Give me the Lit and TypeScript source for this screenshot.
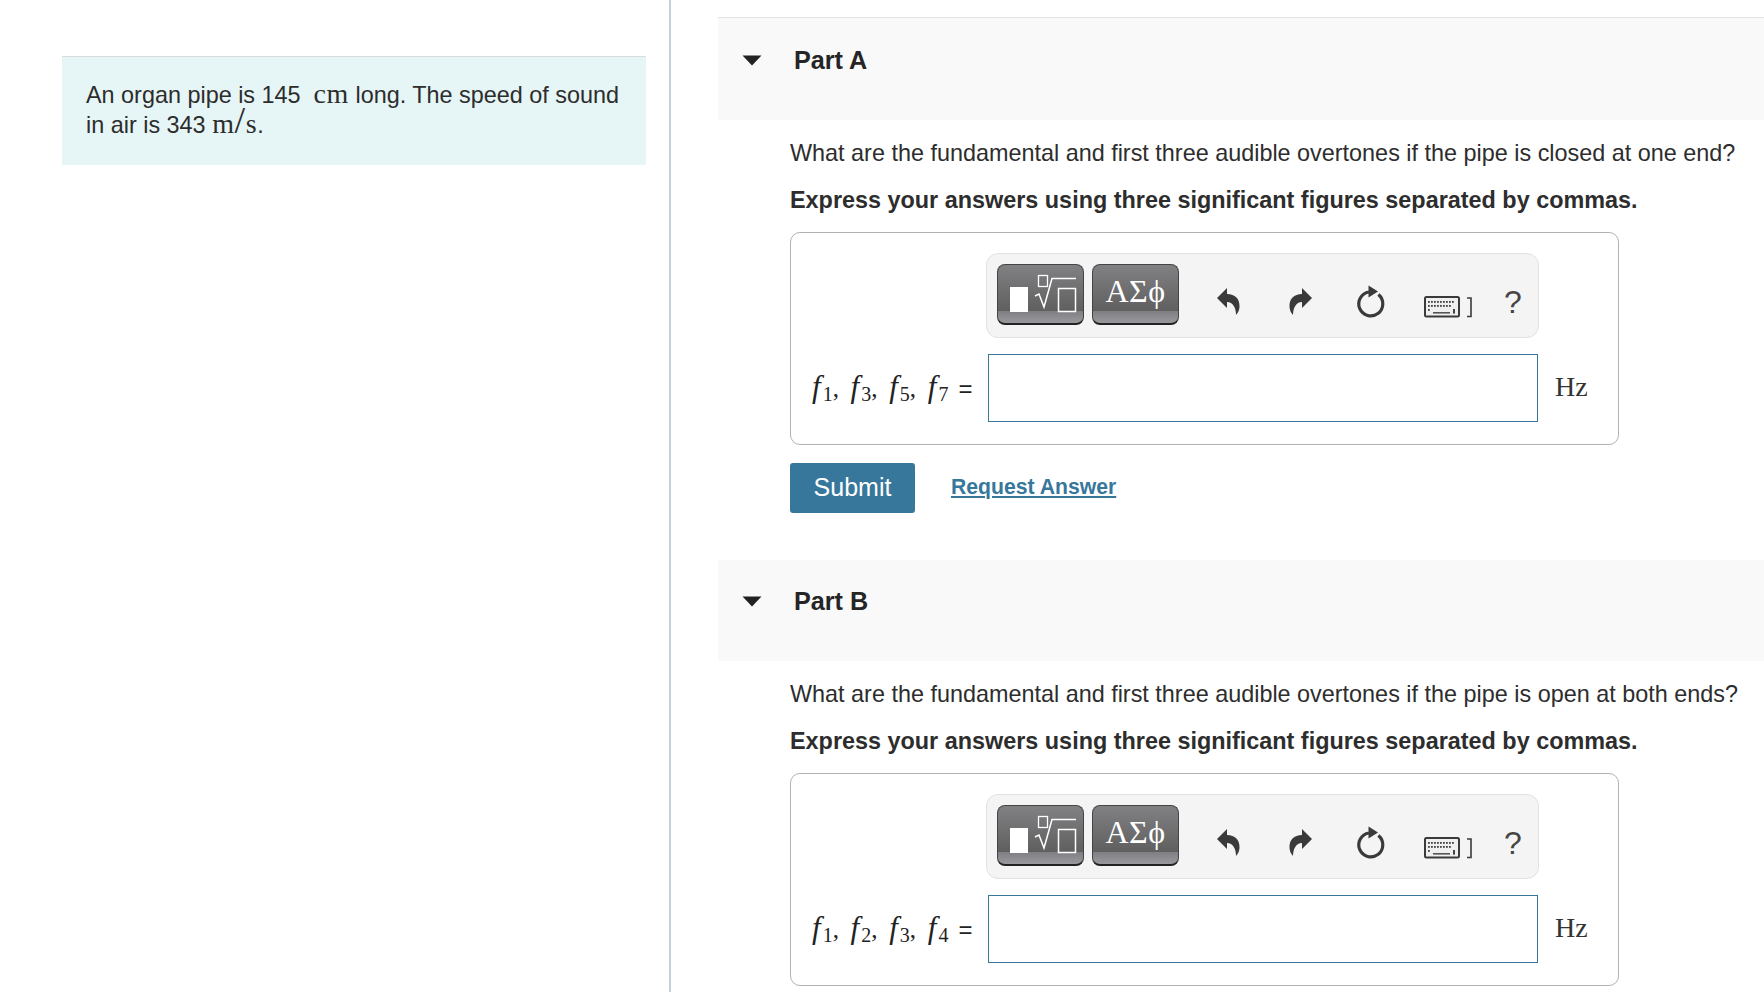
import { LitElement, html, css, svg, nothing } from "lit";
import { customElement } from "lit/decorators.js";

const undoPath = "M2 12 L12 2 V8 C20 8 25 13 24.5 21 C24.3 24 23 27 21 29 C21 22 18 16 12 16 V22 Z";

const keyRows = [
  [6, 9, 12, 15, 18, 21, 24, 27, 30],
  [6, 9, 12, 15, 18, 21, 24, 27],
];

@customElement("math-toolbar")
class MathToolbar extends LitElement {
  static styles = css`
    :host { display: flex; box-sizing: border-box; width: 553px; height: 85px; margin-left: 195px;
      background: #f4f4f4; border: 1px solid #e2e2e2; border-radius: 12px; padding: 10px 0 0 10px; }
    .btn { box-sizing: border-box; width: 87px; height: 61px; border: 1px solid #444; border-bottom: 2px solid #222;
      border-radius: 8px; margin-right: 8px; flex: none; overflow: hidden; display: flex; justify-content: center;
      background: linear-gradient(#818184 0, #5f5f5f 46px, #7f7f83 46px, #99999d 100%); }
    .btn svg { display: block; }
    .greek { color: #fff; font: 32px/1 "Liberation Serif", serif; padding-top: 10px; letter-spacing: 0.5px; }
    svg.ic { display: block; flex: none; }
    .undo { margin: 22px 0 0 28px; }
    .redo { margin: 22px 0 0 45px; }
    .reset { margin: 21px 0 0 41px; }
    .kbd { margin: 32px 0 0 37px; }
    .help { font: 32px/1 "Liberation Sans", sans-serif; color: #444; margin: 22px 0 0 30px; }
  `;
  render() {
    return html`
      <div class="btn">
        <svg width="85" height="58" viewBox="0 0 85 58" fill="none" stroke="#fff">
          <rect x="12" y="22" width="18" height="25" fill="#fff" stroke="none"></rect>
          <rect x="40.5" y="10.5" width="9" height="11" stroke-width="1.3"></rect>
          <path d="M37 31 L41 29 L46 42 L54 13.5 H78" stroke-width="1.5"></path>
          <rect x="60.5" y="23.5" width="17" height="23" stroke-width="1.5"></rect>
        </svg>
      </div>
      <div class="btn"><span class="greek">ΑΣϕ</span></div>
      <svg class="ic undo" width="27" height="31" viewBox="0 0 27 31"><path d=${undoPath} fill="#3a3a3a"></path></svg>
      <svg class="ic redo" width="27" height="31" viewBox="0 0 27 31"><path d=${undoPath} fill="#3a3a3a" transform="translate(27 0) scale(-1 1)"></path></svg>
      <svg class="ic reset" width="32" height="34" viewBox="0 0 32 34">
        <path d="M23.4 9.6 A12 12 0 1 1 14 7" fill="none" stroke="#3a3a3a" stroke-width="3.2"></path>
        <path d="M13.5 0.5 L23 6.5 L13.5 12.5 Z" fill="#3a3a3a"></path>
      </svg>
      <svg class="ic kbd" width="50" height="22" viewBox="0 0 50 22">
        <rect x="1" y="1" width="34" height="19.5" rx="1.5" fill="#efefef" stroke="#3a3a3a" stroke-width="2"></rect>
        ${keyRows.map((row, r) => row.map((x) => svg`<rect x=${x - 2} y=${5 + r * 4} width="1.8" height="1.8" fill="#444"></rect>`))}
        <rect x="4" y="13" width="1.8" height="1.8" fill="#444"></rect>
        <rect x="9" y="16" width="17" height="1.6" fill="#555"></rect>
        <rect x="29" y="13" width="2" height="4.6" fill="#444"></rect>
        <path d="M43 2 H47 V20.5 H43" fill="none" stroke="#3a3a3a" stroke-width="1.6"></path>
      </svg>
      <span class="help">?</span>
    `;
  }
}

@customElement("part-section")
class PartSection extends LitElement {
  static properties = { title: {}, question: {}, subs: { type: Array }, actions: { type: Boolean } };
  title = "";
  question = "";
  subs: number[] = [];
  actions = false;
  static styles = css`
    :host { display: block; height: 541px; color: #2d2d2d; font-family: "Liberation Sans", Arial, sans-serif; }
    .head { box-sizing: border-box; height: 103px; background: #f9f9f9; border-top: 1px solid #e2e2e2;
      display: flex; align-items: flex-start; padding: 28px 0 0 25px; background-clip: padding-box; }
    :host(.plain) .head { border-top: 2px solid #fff; padding-top: 27px; }
    .tri { width: 20px; height: 11px; margin-top: 9px; flex: none; margin-left: -1px; }
    .title { font-size: 25.2px; line-height: 30px; font-weight: 700; margin-left: 32px; color: #252525; margin-top: -1px; }
    .body { padding-left: 72px; }
    .q { font-size: 23.4px; line-height: 30px; margin-top: 18px; white-space: nowrap; }
    .note { font-size: 23.4px; line-height: 30px; font-weight: 700; margin-top: 17px; white-space: nowrap; }
    .box { box-sizing: border-box; width: 829px; height: 213px; margin-top: 17px; border: 1px solid #b2b2b2;
      border-radius: 10px; padding-top: 20px; }
    .row { display: flex; align-items: center; margin-top: 16px; }
    .label { box-sizing: border-box; width: 197px; padding-left: 21px; font: 25px/30px "Liberation Serif", serif; white-space: nowrap; color: #222; display: flex; align-items: baseline; }
    .grp { display: block; width: 38.6px; flex: none; }
    .label i { font-size: 31px; margin-right: 2px; }
    .label sub { font-size: 20px; line-height: 0; vertical-align: -4px; }
    .label .eq { font-family: "Liberation Sans", sans-serif; font-size: 24px; margin-left: -8px; }
    input { box-sizing: border-box; width: 550px; height: 68px; border: 1px solid #37779b; background: #fff; margin: 0; outline: none; flex: none; }
    .unit { font: 28px/30px "Liberation Serif", serif; margin: -2px 0 0 17px; color: #333; }
    .actions { display: flex; align-items: center; margin-top: 18px; }
    button { box-sizing: border-box; width: 125px; height: 50px; background: #37779b; color: #fff; border: 0; border-radius: 3px;
      font: 25px "Liberation Sans", sans-serif; padding: 0 0 2px; }
    a { font-size: 21.2px; font-weight: 700; color: #37779b; text-decoration: underline; margin: -2px 0 0 36px; }
  `;
  render() {
    return html`
      <div class="head">
        <svg class="tri" viewBox="0 0 20 11"><path d="M0.5 0.5 H19.5 L10 10.5 Z" fill="#222"></path></svg>
        <span class="title">${this.title}</span>
      </div>
      <div class="body">
        <div class="q">${this.question}</div>
        <div class="note">Express your answers using three significant figures separated by commas.</div>
        <div class="box">
          <math-toolbar></math-toolbar>
          <div class="row">
            <div class="label">${this.subs.map((n, i) => html`<span class="grp"><i>f</i><sub>${n}</sub>${i < 3 ? "," : ""}</span>`)}<span class="eq">=</span></div>
            <input type="text" />
            <span class="unit">Hz</span>
          </div>
        </div>
        ${this.actions
          ? html`<div class="actions"><button>Submit</button><a href="#">Request Answer</a></div>`
          : nothing}
      </div>
    `;
  }
}

@customElement("app-root")
class AppRoot extends LitElement {
  static styles = css`
    :host { display: flex; width: 1764px; height: 992px; overflow: hidden; background: #fff; }
    .left { box-sizing: border-box; width: 671px; height: 992px; flex: none; border-right: 2px solid #c3d2df; padding: 56px 0 0 62px; }
    .intro { box-sizing: border-box; width: 584px; height: 109px; background: #e6f5f6; border-top: 1px solid #dcdcdc;
      padding: 23px 10px 0 24px; font: 23.4px/30px "Liberation Sans", Arial, sans-serif; color: #2d2d2d; }
    .m { font-family: "Liberation Serif", serif; font-size: 28px; line-height: 0; letter-spacing: 0.6px; }
    .slash { font-size: 38px; line-height: 0; }
    .right { flex: 1; min-width: 0; padding: 17px 0 0 47px; overflow: hidden; }
  `;
  render() {
    return html`
      <div class="left">
        <div class="intro">An organ pipe is 145 &nbsp;<span class="m">cm</span> long. The speed of sound in air is 343 <span class="m">m<span class="slash">/</span>s</span>.</div>
      </div>
      <div class="right">
        <part-section actions title="Part A" question="What are the fundamental and first three audible overtones if the pipe is closed at one end?" .subs=${[1, 3, 5, 7]}></part-section>
        <part-section class="plain" title="Part B" question="What are the fundamental and first three audible overtones if the pipe is open at both ends?" .subs=${[1, 2, 3, 4]}></part-section>
      </div>
    `;
  }
}
